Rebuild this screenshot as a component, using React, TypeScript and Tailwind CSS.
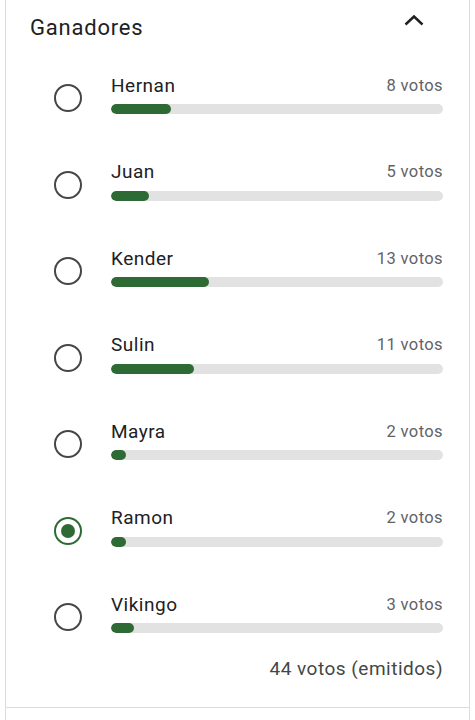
import React from 'react';

type Option = { name: string; votes: number; selected?: boolean };

const options: Option[] = [
  { name: 'Hernan', votes: 8 },
  { name: 'Juan', votes: 5 },
  { name: 'Kender', votes: 13 },
  { name: 'Sulin', votes: 11 },
  { name: 'Mayra', votes: 2 },
  { name: 'Ramon', votes: 2, selected: true },
  { name: 'Vikingo', votes: 3 },
];

const total = options.reduce((sum, o) => sum + o.votes, 0);

function Radio({ checked }: { checked?: boolean }) {
  if (checked) {
    return (
      <div className="flex h-[28px] w-[28px] shrink-0 items-center justify-center rounded-full border-[2.5px] border-[#2e6b34]">
        <div className="h-[14px] w-[14px] rounded-full bg-[#2e6b34]" />
      </div>
    );
  }
  return <div className="h-[28px] w-[28px] shrink-0 rounded-full border-[2.5px] border-[#444746]" />;
}

function OptionRow({ option }: { option: Option }) {
  return (
    <div className="flex items-start">
      <div className="mt-[10px] flex w-[105px] justify-end pr-[29px]">
        <Radio checked={option.selected} />
      </div>
      <div className="flex flex-1 flex-col">
        <div className="flex h-[24px] items-center justify-between">
          <span className="text-[19px] tracking-[0.5px] text-[#202124]">{option.name}</span>
          <span className="text-[16.5px] tracking-[0.4px] text-[#5f6368]">{option.votes} votos</span>
        </div>
        <div className="mt-[6px] h-[10px] w-full overflow-hidden rounded-full bg-[#e2e2e2]">
          <div
            className="h-full rounded-full bg-[#2e6b34]"
            style={{ width: `${(option.votes / total) * 100}%` }}
          />
        </div>
      </div>
    </div>
  );
}

export default function App() {
  return (
    <div className="min-h-[720px] bg-white px-[5px]" style={{ fontFamily: 'Roboto, "Noto Sans", sans-serif' }}>
      <div className="min-h-[720px] border-x border-[#dadce0]">
        <div className="pr-[26px]">
          <div className="flex h-[54px] items-center justify-between pl-[24px] pr-[19px]">
            <h2 className="text-[22px] font-normal tracking-[0.8px] text-[#202124]">Ganadores</h2>
            <svg width="20" height="12" viewBox="0 0 20 12" className="-mt-[15px]">
              <polyline points="1.5,10.5 10,2.5 18.5,10.5" fill="none" stroke="#202124" strokeWidth="2.5" />
            </svg>
          </div>
          <div className="mt-[20px] flex flex-col gap-[46.5px]">
            {options.map((o) => (
              <OptionRow key={o.name} option={o} />
            ))}
          </div>
          <div className="mt-[24px] pb-[26px] text-right text-[19px] leading-[24px] tracking-[0.5px] text-[#444746]">
            {total} votos (emitidos)
          </div>
        </div>
        <div className="border-t border-[#dadce0]" />
      </div>
    </div>
  );
}
